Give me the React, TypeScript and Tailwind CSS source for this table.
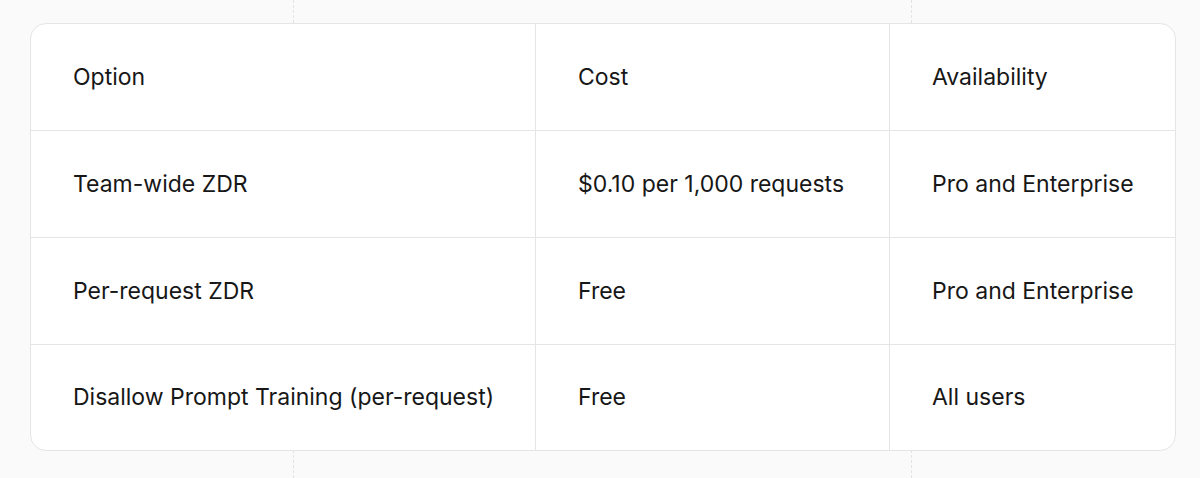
import React from "react";

const rows = [
  ["Option", "Cost", "Availability"],
  ["Team-wide ZDR", "$0.10 per 1,000 requests", "Pro and Enterprise"],
  ["Per-request ZDR", "Free", "Pro and Enterprise"],
  ["Disallow Prompt Training (per-request)", "Free", "All users"],
];

export default function App() {
  return (
    <div
      className="relative w-[1200px] h-[478px] bg-[#fafafa] pt-[23px] pl-[30px]"
      style={{ fontFamily: "Inter, 'Noto Sans', sans-serif" }}
    >
      <div className="absolute left-[293px] top-0 h-full border-l border-dashed border-[#e3e3e3]" />
      <div className="absolute left-[911px] top-0 h-full border-l border-dashed border-[#e3e3e3]" />
      <div className="relative w-[1146px] rounded-[16px] border border-[#e5e5e5] bg-white overflow-hidden">
        {rows.map((r, i) => (
          <div
            key={i}
            className={
              i < rows.length - 1
                ? "grid grid-cols-[505px_354px_1fr] h-[107px] border-b border-[#e5e5e5]"
                : "grid grid-cols-[505px_354px_1fr] h-[105px]"
            }
          >
            {r.map((c, j) => (
              <div
                key={j}
                className={`flex items-center pl-[42px] text-[23px] text-[#171717] ${j < 2 ? "border-r border-[#e5e5e5]" : ""}`}
              >
                {c}
              </div>
            ))}
          </div>
        ))}
      </div>
    </div>
  );
}
